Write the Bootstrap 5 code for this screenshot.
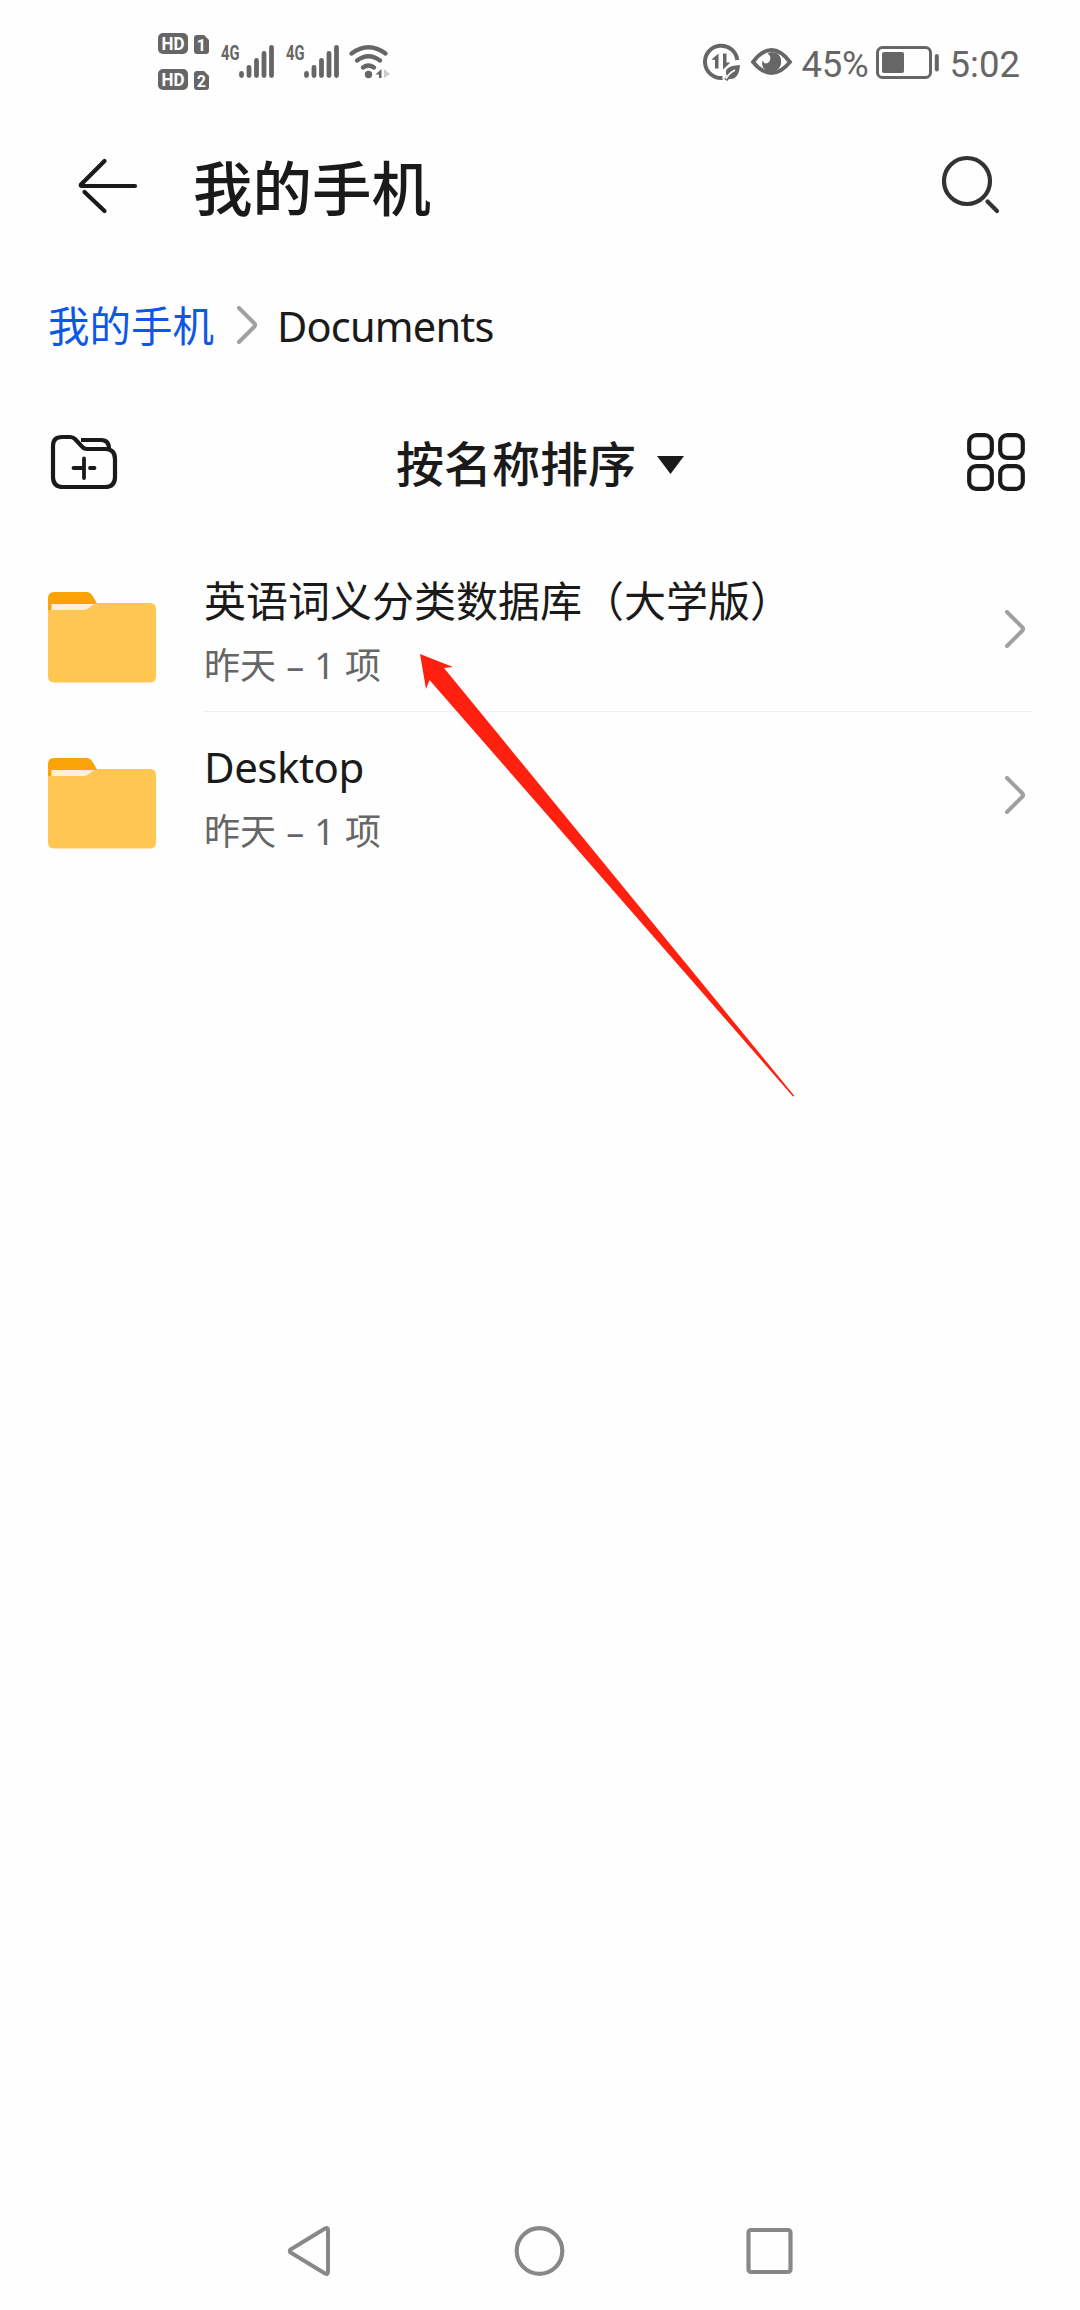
<!DOCTYPE html>
<html lang="zh-CN">
<head>
<meta charset="utf-8">
<meta name="viewport" content="width=device-width, initial-scale=1">
<title>我的手机</title>
<link href="https://cdn.jsdelivr.net/npm/bootstrap@5.3.0/dist/css/bootstrap.min.css" rel="stylesheet">
<style>
body{background:#fefefe;color:#1a1a1a;font-family:"Noto Sans","Noto Sans CJK SC",sans-serif}
svg{display:block;flex:none}
.phone{width:1080px;height:2310px;overflow:hidden}
.statusbar{height:120px;padding:33px 60px 0 158px;color:#666}
.clock-text{font:400 36.5px/46px Roboto,sans-serif;padding-top:9px}
.pct{width:74px;margin-left:3px;letter-spacing:-.3px}
.clock{margin-left:8px}
.hd-col{gap:15px}
.titlebar{height:142px;padding:0 78px 10px 76px}
.titlebar h1{font-size:59.5px;line-height:80px;font-weight:500;margin:0 0 2px 55px;font-family:"Noto Sans CJK SC",sans-serif}
.crumbs{height:128px;padding:0 48px;font-size:41.5px;line-height:60px}
.crumbs a{color:#0d57e8}
.crumb-sep{margin:0 20px 2px 23px}
.crumb-here{letter-spacing:-.8px}
.toolbar{height:144px;padding:0 54px 0 50px}
.sorter{font-size:48px;line-height:70px;font-weight:500;gap:21px;margin-right:4px;margin-bottom:2px;font-family:"Noto Sans CJK SC",sans-serif}
.sorter svg{margin-top:8px}
.listing{padding-top:12px}
.entry{height:166px;padding:0 48px}
.entry-body{margin-left:48px;border-bottom:1.5px solid transparent;padding-right:7px}
.entry:first-child .entry-body{border-color:#eee}
.entry-name{font-size:42px;line-height:56px;padding-top:27px}
.entry-latin{letter-spacing:-.5px}
.entry-meta{font-size:36px;line-height:50px;margin-top:12px;color:#666;word-spacing:.8px}
.entry-folder{margin-top:46px}
.pointer{left:0;top:0;pointer-events:none}
.sysnav{height:118px;padding:0 287px}
</style>
<script src="https://cdn.jsdelivr.net/npm/bootstrap@5.3.0/dist/js/bootstrap.bundle.min.js"></script>
</head>
<body>
<svg width="0" height="0" class="position-absolute">
  <defs>
    <symbol id="chev" viewBox="0 0 20 38"><path d="M2 2 17 17Q19 19 17 21L2 36" fill="none" stroke="#a0a0a0" stroke-width="4" stroke-linecap="round"/></symbol>
    <symbol id="folder" viewBox="0 0 108 91">
      <path d="M0 20V6Q0 0 6 0H39Q42 0 44 3L50 13 38 20Z" fill="#faa307"/>
      <path d="M3.500 12H50V20H3.500Z" fill="#fff1d6"/>
      <path d="M0 18H36Q38 18 40 16.500L44 13.500Q47 11 51 11H102Q108 11 108 17V84Q108 90.500 102 90.500H6Q0 90.500 0 84Z" fill="#ffc752"/>
    </symbol>
  </defs>
</svg>
<div class="phone d-flex flex-column position-relative">
  <header class="statusbar d-flex align-items-start">
    <div class="hd-col d-flex flex-column">
      <svg width="52" height="21" viewBox="0 0 52 21"><rect width="30" height="21" rx="5" fill="#666"/><text x="15" y="16.500" font-family="Roboto" font-weight="700" font-size="18" text-anchor="middle" textLength="23" lengthAdjust="spacingAndGlyphs" fill="#fff">HD</text><path d="M36 5Q36 2 39 2H46L51 7V18Q51 21 48 21H39Q36 21 36 18Z" fill="#666"/><text x="43.300" y="17.500" font-family="Roboto" font-weight="700" font-size="16" text-anchor="middle" fill="#fff">1</text></svg>
      <svg width="52" height="21" viewBox="0 0 52 21"><rect width="30" height="21" rx="5" fill="#666"/><text x="15" y="16.500" font-family="Roboto" font-weight="700" font-size="18" text-anchor="middle" textLength="23" lengthAdjust="spacingAndGlyphs" fill="#fff">HD</text><path d="M36 5Q36 2 39 2H46L51 7V18Q51 21 48 21H39Q36 21 36 18Z" fill="#666"/><text x="43.300" y="17.500" font-family="Roboto" font-weight="700" font-size="16" text-anchor="middle" fill="#fff">2</text></svg>
    </div>
    <svg width="182" height="57" viewBox="210 33 182 57">
      <g font-family="Roboto" font-weight="700" font-size="21" fill="#666"><text x="221" y="60" textLength="18.500" lengthAdjust="spacingAndGlyphs">4G</text><text x="286" y="60" textLength="18.500" lengthAdjust="spacingAndGlyphs">4G</text></g>
      <g fill="none" stroke="#666" stroke-width="4.800" stroke-linecap="round">
        <path d="M241.500 73.500v2M249 67.500v8M256.500 60.500v15M264 53.500v22M271.500 47.500v28"/><path d="M306.500 73.500v2M314 67.500v8M321.500 60.500v15M329 53.500v22M336.500 47.500v28"/>
        <path d="M351.500 53.500Q368.500 41 385.500 53.500M357 60.500Q368.500 52 380 60.500M363 67.500Q368.500 63.500 374 67.500" stroke-width="4.400"/></g>
      <circle cx="368.500" cy="74.500" r="3.700" fill="#666"/><path d="M381.500 69V78H379V74.500H375.500Z" fill="#666"/><path d="M384 69 390 74 384 78Z" fill="#ccc"/>
    </svg>
    <div class="ms-auto d-flex align-items-start">
      <svg width="96" height="57" viewBox="701 33 96 57">
        <path d="M735.300 60A16.200 16.200 0 1 0 720.500 78" fill="none" stroke="#666" stroke-width="4"/>
        <path d="M709.500 59.500 716.500 53.500V68.500H713V60ZM721 53.500H724.500V62.500H728.500L721 69.500Z" fill="#666"/>
        <path d="M725 76Q720 66 738 65Q737 80 727 79L725.500 81L722 79Z" fill="#666"/><path d="M724 79Q727 73 733 70" stroke="#fefefe" stroke-width="1.500" fill="none"/>
        <path d="M751 62Q760 50 769.500 50T788 62Q779 73 769.500 73T751 62Z" fill="none" stroke="#666" stroke-width="3.800"/>
        <path d="M768 52.500C777 51 780 58 779 64 777 73 764 75 760.500 66 760 64 760 62.500 760.500 60.500Q763 66 767.500 61.500 770 56 765.500 53.500Z" fill="#666"/>
      </svg>
      <span class="clock-text pct">45%</span>
      <svg width="66" height="57" viewBox="869 33 66 57" overflow="visible"><rect x="870.500" y="47.500" width="53" height="30" rx="5" fill="none" stroke="#666" stroke-width="3"/><rect x="875" y="52" width="22" height="21" rx="2" fill="#666"/><path d="M929.800 56v13.500" stroke="#666" stroke-width="4" stroke-linecap="round"/></svg>
      <span class="clock-text clock">5:02</span>
    </div>
  </header>

  <nav class="titlebar d-flex align-items-center">
    <svg width="62" height="62" viewBox="76 155 62 62"><path d="M104.500 161 81 184.500Q80 186 82 186H135M84.500 192 104.500 211" fill="none" stroke="#1a1a1a" stroke-width="4.200" stroke-linecap="round" stroke-linejoin="round"/></svg>
    <h1>我的手机</h1>
    <svg class="ms-auto" width="60" height="62" viewBox="942 155 60 62"><circle cx="967" cy="181" r="23" fill="none" stroke="#333" stroke-width="4.200"/><path d="M987.500 201.500 997 211" stroke="#333" stroke-width="4.200" stroke-linecap="round"/></svg>
  </nav>

  <div class="crumbs d-flex align-items-center">
    <a class="text-decoration-none" href="#">我的手机</a>
    <svg class="crumb-sep" width="20" height="38"><use href="#chev"/></svg>
    <span class="crumb-here">Documents</span>
  </div>

  <div class="toolbar d-flex align-items-center justify-content-between">
    <svg width="68" height="62" viewBox="50 431 68 62"><g fill="none" stroke="#1a1a1a" stroke-width="4.200"><path d="M53 446Q53 437 62 437H70Q73 437 75 439L82 446.500Q84 449 87 449H105Q115 449 115 459V477Q115 487 105 487H63Q53 487 53 477Z"/><path d="M81 440H101Q109 440 109 449" /><path d="M84 458.500V478M73.500 468H84M90 468H94.500" stroke-width="3.800" stroke-linecap="round"/></g></svg>
    <div class="sorter d-flex align-items-center"><span>按名称排序</span><svg width="27" height="18"><path d="M0 0H27L13.500 18Z" fill="#1a1a1a"/></svg></div>
    <svg width="60" height="60" viewBox="0 0 60 60"><g fill="none" stroke="#1a1a1a" stroke-width="4.200"><rect x="3.200" y="3.200" width="22.600" height="22.600" rx="7"/><rect x="34.200" y="3.200" width="22.600" height="22.600" rx="7"/><rect x="3.200" y="34.200" width="22.600" height="22.600" rx="7"/><rect x="34.200" y="34.200" width="22.600" height="22.600" rx="7"/></g></svg>
  </div>

  <main class="listing flex-grow-1">
    <div class="entry d-flex">
      <svg class="entry-folder" width="108" height="91"><use href="#folder"/></svg>
      <div class="entry-body d-flex flex-grow-1 align-items-center">
        <div class="flex-grow-1 align-self-start"><div class="entry-name">英语词义分类数据库（大学版）</div><div class="entry-meta">昨天 – 1 项</div></div>
        <svg width="20" height="38"><use href="#chev"/></svg>
      </div>
    </div>
    <div class="entry d-flex">
      <svg class="entry-folder" width="108" height="91"><use href="#folder"/></svg>
      <div class="entry-body d-flex flex-grow-1 align-items-center">
        <div class="flex-grow-1 align-self-start"><div class="entry-name entry-latin">Desktop</div><div class="entry-meta">昨天 – 1 项</div></div>
        <svg width="20" height="38"><use href="#chev"/></svg>
      </div>
    </div>
  </main>

  <footer class="sysnav d-flex align-items-center justify-content-between">
    <svg width="44" height="52" viewBox="0 0 44 52"><path d="M38 3.500 3.500 24.500Q2 26 3.500 27.500L38 48.500Q41 50 41 47V5Q41 2 38 3.500Z" fill="none" stroke="#888" stroke-width="4"/></svg>
    <svg width="52" height="52"><circle cx="26.500" cy="26" r="22.800" fill="none" stroke="#888" stroke-width="4.200"/></svg>
    <svg width="47" height="52"><rect x="2.500" y="5" width="42" height="42" rx="2.500" fill="none" stroke="#888" stroke-width="4.200"/></svg>
  </footer>

  <svg class="pointer position-absolute" width="1080" height="1120"><path d="M420 654 453 667 444 668 794.500 1096 793 1096.500 429.500 680 426 689Z" fill="#ff2010"/></svg>
</div>
</body>
</html>
